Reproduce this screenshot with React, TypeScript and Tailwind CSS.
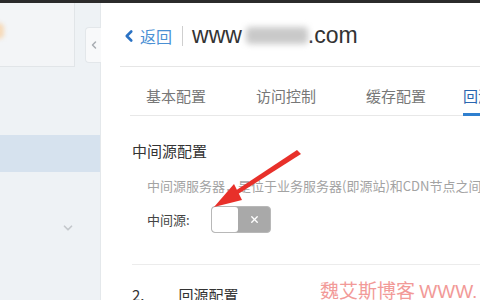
import { ChevronLeft, ChevronDown, X } from "lucide-react";

const tabs = ["基本配置", "访问控制", "缓存配置"];

const Sidebar = () => {
  return (
    <aside className="relative w-[101px] shrink-0 bg-[#eef2f5] border-r border-[#e4e8eb]">
      <div className="flex h-[64px] w-[75px] items-start border-b border-r border-[#e1e5e8] bg-[#f3f5f7] pt-[20px]">
        <div className="ml-[-6px] h-[16px] w-[10px] rounded-full bg-[#f6d9b8] blur-[2px]" />
      </div>
      <div className="absolute left-[85px] top-[24px] flex h-[36px] w-[16px] items-center justify-center rounded-l-sm border border-r-0 border-[#e3e7ea] bg-[#f8f9fa]">
        <ChevronLeft className="h-3 w-3 text-[#a8adb2]" strokeWidth={3} />
      </div>
      <div className="mt-[68px] h-[37px] bg-[#d6e2ee]" />
      <div className="flex h-[112px] items-center justify-end pr-[25px]">
        <ChevronDown className="h-3.5 w-3.5 text-[#c4c8cc]" strokeWidth={3} />
      </div>
    </aside>
  );
};

const Header = () => {
  return (
    <div className="flex h-[64px] items-center border-b border-[#e6e6e6] pt-[2px]">
      <ChevronLeft className="h-[18px] w-[18px] text-[#2a72c4]" strokeWidth={3.5} />
      <span className="ml-[2px] text-[16px] text-[#4a90d4]">返回</span>
      <span className="ml-[10px] h-[20px] w-px bg-[#cfcfcf]" />
      <span className="ml-[9px] font-['Liberation_Sans',sans-serif] text-[23px] text-[#333]">
        www
      </span>
      <span className="ml-[4px] h-[17px] w-[62px] rounded-sm bg-[#c9c9c9] blur-[3px]" />
      <span className="font-['Liberation_Sans',sans-serif] text-[23px] text-[#333]">.com</span>
    </div>
  );
};

const Tabs = () => {
  return (
    <div className="ml-[10px] flex h-[49px] items-end border-b border-[#e8e8e8]">
      <div className="flex h-full w-full items-center pt-[10px] pl-[16px] text-[15px] text-[#777]">
        {tabs.map((t) => (
          <span key={t} className="mr-[50px] whitespace-nowrap">
            {t}
          </span>
        ))}
        <div className="relative ml-[-13px] flex h-full items-center whitespace-nowrap text-[#2a66b0]">
          回源配置
          <span className="absolute bottom-[-1px] left-0 h-[3px] w-[40px] bg-[#2f7fcf]" />
        </div>
      </div>
    </div>
  );
};

const Switch = () => {
  return (
    <div className="flex h-[27px] w-[60px] overflow-hidden rounded-[4px] border border-[#b8b8b8] bg-[#a9a9a9]">
      <div className="h-full w-[26px] rounded-[3px] bg-white" />
      <div className="flex flex-1 items-center justify-center">
        <X className="h-[11px] w-[11px] text-white" strokeWidth={3} />
      </div>
    </div>
  );
};

const Arrow = () => {
  return (
    <svg className="absolute left-[205px] top-[148px]" width="100" height="70" viewBox="0 0 100 70">
      <polygon points="92,2 96,6 30,48 27,45" fill="#e8302a" />
      <polygon points="9,59 29,36 37,52" fill="#e8302a" />
    </svg>
  );
};

export default function App() {
  return (
    <div className="relative h-[300px] w-[480px] overflow-hidden bg-white font-['Noto_Sans_CJK_SC','Noto_Sans',sans-serif]">
      <div className="h-[3px] bg-[#2b2b2b]" />
      <div className="flex h-[297px]">
        <Sidebar />
        <main className="min-w-0 flex-1 pl-[19px]">
          <Header />
          <Tabs />
          <section className="ml-[12px] border-b border-[#ececec] pb-[31px]">
            <h2 className="mt-[25px] text-[15px] leading-[20px] text-[#333]">中间源配置</h2>
            <p className="ml-[15px] mt-[17px] whitespace-nowrap text-[13px] leading-[16px] text-[#a3a3a3]">
              中间源服务器，是位于业务服务器(即源站)和CDN节点之间
            </p>
            <div className="ml-[15px] mt-[12px] flex items-center">
              <span className="w-[64px] text-[13px] text-[#444]">中间源:</span>
              <Switch />
            </div>
          </section>
          <div className="ml-[12px] mt-[20px] flex items-center text-[15px] leading-[20px] text-[#333]">
            <span>2.</span>
            <span className="ml-[34px]">回源配置</span>
          </div>
        </main>
      </div>
      <Arrow />
      <div className="absolute left-[320px] top-[276px] whitespace-nowrap text-[19px] text-[#f29a98]">
        魏艾斯博客 <span className="font-['Liberation_Sans',sans-serif]">WWW.</span>
      </div>
    </div>
  );
}
